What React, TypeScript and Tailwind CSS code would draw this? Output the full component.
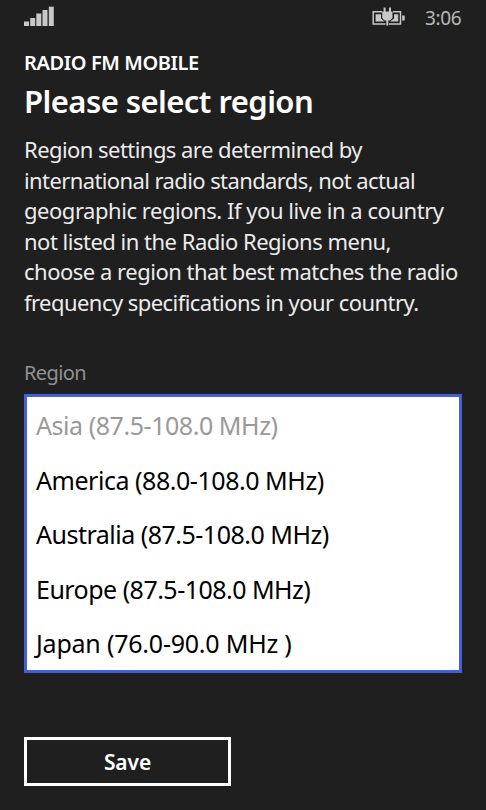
const description = [
  { text: "Region settings are determined by", style: "tracking-[-0.55px]" },
  { text: "international radio standards, not actual", style: "tracking-[-0.6px]" },
  { text: "geographic regions. If you live in a country", style: "tracking-[-0.46px]" },
  { text: "not listed in the Radio Regions menu,", style: "tracking-[-0.5px]" },
  { text: "choose a region that best matches the radio", style: "tracking-[-0.49px]" },
  { text: "frequency specifications in your country.", style: "tracking-[-0.55px]" },
];

const regions = [
  { text: "Asia (87.5-108.0 MHz)", style: "text-[#999] tracking-[-0.45px]" },
  { text: "America (88.0-108.0 MHz)", style: "tracking-[-0.46px]" },
  { text: "Australia (87.5-108.0 MHz)", style: "tracking-[-0.5px]" },
  { text: "Europe (87.5-108.0 MHz)", style: "tracking-[-0.52px]" },
  { text: "Japan (76.0-90.0 MHz )", style: "tracking-[-0.22px]" },
];

function SignalIcon() {
  return (
    <svg width="30" height="20" viewBox="0 0 30 20" fill="#c8c8c8" aria-label="Signal">
      <rect x="0" y="15.5" width="5" height="4.5" />
      <rect x="6.2" y="12" width="5" height="8" />
      <rect x="12.3" y="7.5" width="5" height="12.5" />
      <rect x="18.5" y="4" width="5" height="16" />
      <rect x="24.8" y="0.7" width="5" height="19.3" />
    </svg>
  );
}

function BatteryIcon() {
  return (
    <svg width="34" height="20" viewBox="0 0 34 20" aria-label="Charging">
      <path d="M10 5.8H1.2V18H13.5M21 5.8H28.5V18H17" fill="none" stroke="#c8c8c8" strokeWidth="1.5" />
      <path d="M3.6 8.2H9V12.5L12.5 15.6H3.6ZM22 8.2H26.2V15.6H18L22 12.5Z" fill="#c8c8c8" />
      <path d="M11.6 1.5H13.6V5.5H17V1.5H19V5.5H20.5V12L18 14.5H16.3V19.5H14.3V14.5H12.5L10.2 12V5.5H11.6Z" fill="#c8c8c8" />
      <rect x="30.2" y="9.5" width="2.5" height="5" fill="#c8c8c8" />
    </svg>
  );
}

export default function App() {
  return (
    <main className="flex h-[810px] w-[486px] flex-col overflow-hidden bg-[#1f1f1f] px-6 font-['Noto_Sans',sans-serif] text-white">
      <header className="flex h-[51px] items-start justify-between pt-1.5">
        <SignalIcon />
        <div className="flex items-start">
          <BatteryIcon />
          <span className="ml-[19px] w-[37px] pt-px text-[19px] leading-[22px] tracking-[-0.4px] whitespace-nowrap text-[#b8b8b8]">3:06</span>
        </div>
      </header>
      <h2 className="text-[20px] leading-6 font-semibold tracking-[-0.4px]">RADIO FM MOBILE</h2>
      <h1 className="mt-1.5 text-[31px] leading-10 font-semibold tracking-[-0.55px]">Please select region</h1>
      <p className="mt-[13px] text-[22px] leading-[30.5px] text-[#ececec]">
        {description.map((line) => (
          <span key={line.text} className={`block whitespace-nowrap ${line.style}`}>{line.text}</span>
        ))}
      </p>
      <label className="mt-11 text-[20px] leading-6 tracking-[-0.6px] text-[#929292]">Region</label>
      <ul className="mt-[9px] h-[279px] shrink-0 border-3 border-[#4260dd] bg-white pt-px pl-[9px] text-[25px] leading-[54.6px] text-black">
        {regions.map((region) => (
          <li key={region.text} className={`h-[54.6px] whitespace-nowrap ${region.style}`}>{region.text}</li>
        ))}
      </ul>
      <button className="mt-16 h-[49px] w-[207px] shrink-0 border-3 border-white pt-px text-[21px] leading-[42px] font-semibold tracking-[-0.1px]">Save</button>
    </main>
  );
}
